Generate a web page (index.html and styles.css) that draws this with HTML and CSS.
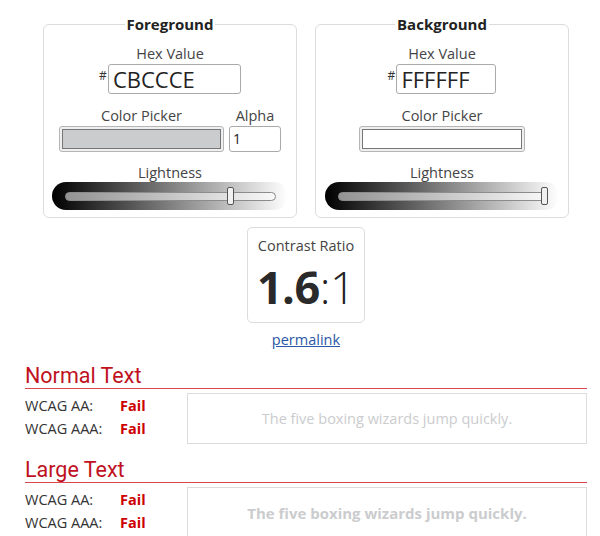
FILE: index.html
```html
<!DOCTYPE html>
<html lang="en">
<head>
<meta charset="utf-8">
<title>Contrast Checker</title>
<link rel="stylesheet" href="styles.css">
</head>
<body>
<main class="page">
  <div class="pickers">
    <fieldset class="picker picker-fg">
      <legend>Foreground</legend>
      <div class="label">Hex Value</div>
      <div class="hex-row">
        <span class="hash">#</span>
        <div class="hex-input hex-fg">CBCCCE</div>
      </div>
      <div class="pick-row">
        <div class="pick-col">
          <div class="label">Color Picker</div>
          <div class="swatch swatch-fg"><div class="swatch-inner" style="background:#cbccce"></div></div>
        </div>
        <div class="pick-col">
          <div class="label">Alpha</div>
          <div class="alpha-input">1</div>
        </div>
      </div>
      <div class="label label-light">Lightness</div>
      <div class="slider slider-fg">
        <div class="track"><div class="thumb" style="left:79%"></div></div>
      </div>
    </fieldset>
    <fieldset class="picker picker-bg">
      <legend>Background</legend>
      <div class="label">Hex Value</div>
      <div class="hex-row">
        <span class="hash">#</span>
        <div class="hex-input hex-bg">FFFFFF</div>
      </div>
      <div class="pick-row">
        <div class="pick-col">
          <div class="label">Color Picker</div>
          <div class="swatch swatch-bg"><div class="swatch-inner" style="background:#ffffff"></div></div>
        </div>
      </div>
      <div class="label label-light">Lightness</div>
      <div class="slider slider-bg">
        <div class="track"><div class="thumb" style="left:100%"></div></div>
      </div>
    </fieldset>
  </div>

  <div class="ratio-wrap">
    <div class="ratio-box">
      <div class="ratio-label">Contrast Ratio</div>
      <div class="ratio-value"><b>1.6</b>:1</div>
    </div>
    <a class="permalink" href="#">permalink</a>
  </div>

  <section class="result">
    <h2>Normal Text</h2>
    <div class="result-body">
      <div class="checks">
        <div class="check"><span class="check-name">WCAG AA:</span><span class="fail">Fail</span></div>
        <div class="check"><span class="check-name">WCAG AAA:</span><span class="fail">Fail</span></div>
      </div>
      <div class="sample">The five boxing wizards jump quickly.</div>
    </div>
  </section>

  <section class="result">
    <h2>Large Text</h2>
    <div class="result-body">
      <div class="checks">
        <div class="check"><span class="check-name">WCAG AA:</span><span class="fail">Fail</span></div>
        <div class="check"><span class="check-name">WCAG AAA:</span><span class="fail">Fail</span></div>
      </div>
      <div class="sample sample-large">The five boxing wizards jump quickly.</div>
    </div>
  </section>
</main>
</body>
</html>
```

FILE: styles.css
```css
* { box-sizing: border-box; }

body {
  margin: 0;
  background: #fff;
  color: #333;
  font-family: "Open Sans", "Liberation Sans", sans-serif;
  font-size: 14px;
}

.page {
  width: 562px;
  margin-left: 25px;
  padding-top: 14px;
}

.pickers {
  display: flex;
  justify-content: center;
  gap: 18px;
}

.picker {
  width: 254px;
  height: 204px;
  margin: 0;
  padding: 10px 0 0;
  border: 1px solid #dcdcdc;
  border-radius: 6px;
  display: flex;
  flex-direction: column;
  align-items: center;
}

.picker legend {
  margin: 0 auto;
  padding: 0 2px;
  font-weight: 700;
  font-size: 15px;
  line-height: 20px;
  color: #222;
}

.label {
  font-size: 14.5px;
  line-height: 20px;
  color: #444;
  text-align: center;
}

.hex-row {
  display: flex;
  align-items: flex-start;
}

.hash {
  font-size: 12px;
  line-height: 12px;
  margin-top: 6px;
  margin-right: 1px;
  color: #333;
}

.hex-input {
  height: 30px;
  border: 1px solid #aaa;
  border-radius: 3px;
  font-size: 22px;
  line-height: 28px;
  padding-left: 4px;
  color: #222;
}

.hex-fg { width: 133px; }
.hex-bg { width: 100px; }

.pick-row {
  display: flex;
  gap: 5px;
  margin-top: 12px;
}

.pick-col {
  display: flex;
  flex-direction: column;
  align-items: center;
}

.swatch {
  height: 26px;
  border: 1px solid #b5b5b5;
  border-radius: 3px;
  background: #efefef;
  padding: 2px;
}

.swatch-fg { width: 165px; }
.swatch-bg { width: 166px; }

.swatch-inner {
  width: 100%;
  height: 100%;
  border: 1px solid #767676;
}

.alpha-input {
  width: 52px;
  height: 26px;
  border: 1px solid #aaa;
  border-radius: 3px;
  padding-left: 3px;
  font-size: 14px;
  line-height: 24px;
  color: #222;
}

.label-light {
  margin-top: 11px;
  margin-bottom: -1px;
}

.slider {
  height: 28px;
  border-radius: 14px;
  background: linear-gradient(to right, #000 0%, #fff 100%);
  padding: 10px 12px 0 13px;
}

.slider-fg { width: 236px; }
.slider-bg { width: 234px; padding-right: 13px; }

.track {
  position: relative;
  height: 9px;
  border: 1px solid #8c8c8c;
  border-radius: 5px;
  background: rgba(255, 255, 255, 0.55);
}

.thumb {
  position: absolute;
  top: -6px;
  width: 7px;
  height: 18px;
  margin-left: -4px;
  background: #f0f0f0;
  border: 1px solid #555;
  border-radius: 2px;
}

.ratio-wrap {
  display: flex;
  flex-direction: column;
  align-items: center;
  margin-top: 9px;
}

.ratio-box {
  width: 118px;
  height: 96px;
  border: 1px solid #dcdcdc;
  border-radius: 5px;
  padding-top: 8px;
  text-align: center;
}

.ratio-label {
  font-size: 14.5px;
  line-height: 20px;
  color: #444;
}

.ratio-value {
  font-size: 45px;
  line-height: 56px;
  font-weight: 300;
  color: #222;
  margin-top: 3px;
  letter-spacing: -0.5px;
}

.ratio-value b { font-weight: 700; color: #2a2a2a; }

.permalink {
  margin-top: 7px;
  font-size: 14.5px;
  line-height: 20px;
  color: #2a57a6;
}

.result { margin-top: 13px; }
.result + .result { margin-top: 13px; }

.result h2 {
  margin: 0;
  font-family: Roboto, "Liberation Sans", sans-serif;
  font-weight: 400;
  font-size: 21.5px;
  line-height: 25px;
  color: #c0111f;
  border-bottom: 1px solid #d9464f;
}

.result-body {
  display: flex;
  align-items: flex-start;
}

.checks {
  width: 162px;
  padding-top: 5px;
}

.check {
  display: flex;
  line-height: 23px;
  font-size: 14.5px;
}

.check-name {
  width: 95px;
  color: #333;
}

.fail {
  font-weight: 700;
  color: #c00;
}

.sample {
  flex: 1;
  height: 51px;
  margin-top: 4px;
  border: 1px solid #dcdcdc;
  display: flex;
  align-items: center;
  justify-content: center;
  color: #cbccce;
  font-size: 14.5px;
}

.sample-large {
  font-size: 15px;
  font-weight: 700;
}
```
